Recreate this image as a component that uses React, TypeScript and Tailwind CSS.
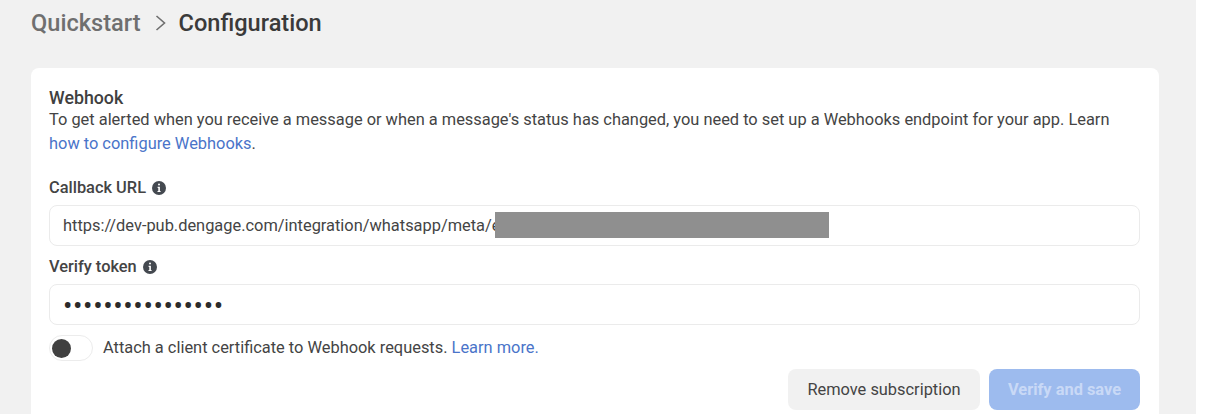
// App.tsx
// Webhook configuration panel

function InfoIcon() {
  return (
    <svg width="14" height="14" viewBox="0 0 14 14" className="ml-[6px] shrink-0">
      <circle cx="7" cy="7" r="7" fill="#444950" />
      <rect x="6" y="2.6" width="2" height="2" rx="1" fill="#fff" />
      <path d="M5.6 5.7h2.3v4.2h.7v1.2H5.5V9.9h.8V6.9h-.7z" fill="#fff" />
    </svg>
  );
}

function TextField({ children }: { children: React.ReactNode }) {
  return (
    <div className="relative flex h-[41px] items-center rounded-[8px] border border-[#ebebeb] bg-white px-[13px] pt-[2px] text-[16.4px] text-[#444]">
      {children}
    </div>
  );
}

export default function App() {
  return (
    <div className="flex h-[414px] w-[1206px] overflow-hidden bg-white font-['Roboto',sans-serif]">
      <div className="flex w-[1196px] flex-col bg-[#f1f1f1] pl-[31px] pr-[37px]">
        <div className="flex h-[68px] items-start pt-[8px] text-[23.6px] font-medium leading-[30px]">
          <span className="text-[#6f6f6f]">Quickstart</span>
          <svg width="12" height="18" viewBox="0 0 12 18" className="ml-[14px] mr-[12px] mt-[6px]">
            <path d="M1.5 2l8 7-8 7" fill="none" stroke="#6f6f6f" strokeWidth="1.6" />
          </svg>
          <span className="text-[#3a3a3a]">Configuration</span>
        </div>

        <div className="flex-1 rounded-t-[8px] bg-white pl-[18px] pr-[19px] pt-[20px] text-[#444]">
          <div className="text-[17.8px] font-medium leading-[20px] text-[#404040]">Webhook</div>
          <p className="text-[16.4px] leading-[24px]">
            To get alerted when you receive a message or when a message's status has changed, you need to set up a Webhooks endpoint for your app. Learn{' '}
            <span className="text-[#4a74c9]">how to configure Webhooks</span>.
          </p>

          <div className="mt-[22px] flex h-[20px] items-center text-[16.4px] font-medium text-[#444]">
            Callback URL
            <InfoIcon />
          </div>
          <div className="mt-[7px]">
            <TextField>
              <span className="whitespace-nowrap">https://dev-pub.dengage.com/integration/whatsapp/meta/e</span>
              <div className="absolute left-[445px] top-[6px] h-[26px] w-[334px] bg-[#8f8f8f]" />
            </TextField>
          </div>

          <div className="mt-[11px] flex h-[20px] items-center text-[16.4px] font-medium text-[#444]">
            Verify token
            <InfoIcon />
          </div>
          <div className="mt-[7px]">
            <TextField>
              <span className="text-[28px] leading-[28px] tracking-[0.6px] text-[#2b2b2b]">••••••••••••••••</span>
            </TextField>
          </div>

          <div className="mt-[10px] flex items-center">
            <div className="flex h-[26px] w-[44px] items-center rounded-full border border-[#ececec] bg-white pl-[2px]">
              <div className="h-[19px] w-[19px] rounded-full bg-[#404040]" />
            </div>
            <span className="ml-[10px] text-[16.4px]">
              Attach a client certificate to Webhook requests. <span className="text-[#4a74c9]">Learn more.</span>
            </span>
          </div>

          <div className="mt-[8px] flex justify-end gap-[9px]">
            <button className="h-[41px] w-[192px] rounded-[8px] bg-[#f1f1f1] pt-[2px] text-[16.4px] text-[#444]">
              Remove subscription
            </button>
            <button className="h-[41px] w-[151px] rounded-[8px] bg-[#9dbbee] pt-[2px] text-[16.4px] font-bold text-[#c9d9f6]">
              Verify and save
            </button>
          </div>
        </div>
      </div>
    </div>
  );
}
